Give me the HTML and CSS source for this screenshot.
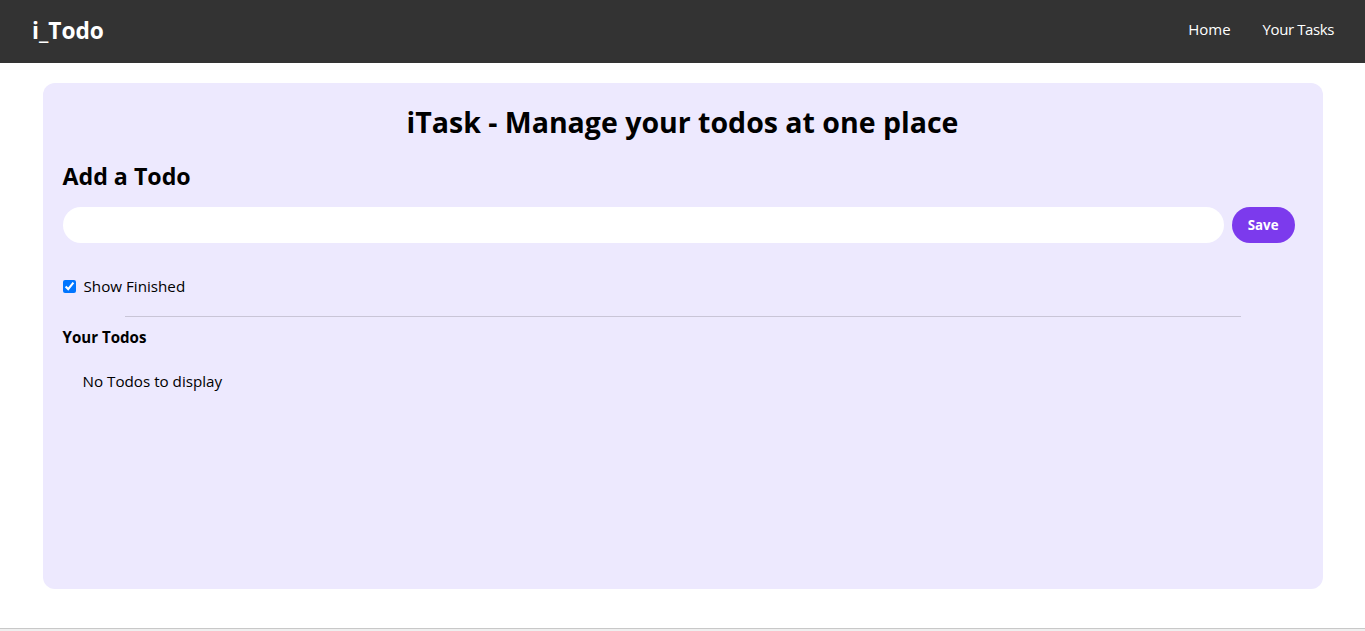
FILE: index.html
```html
<!DOCTYPE html>
<html lang="en">
<head>
<meta charset="utf-8">
<title>iTask</title>
<link rel="stylesheet" href="styles.css">
</head>
<body>
<nav class="navbar">
  <div class="logo">i_Todo</div>
  <ul class="nav-links">
    <li>Home</li>
    <li>Your Tasks</li>
  </ul>
</nav>
<main class="container">
  <h1 class="title">iTask - Manage your todos at one place</h1>
  <section class="add">
    <h2 class="add-heading">Add a Todo</h2>
    <div class="add-row">
      <input class="add-input" type="text">
      <button class="save-btn">Save</button>
    </div>
  </section>
  <div class="filter">
    <input class="filter-check" type="checkbox" checked>
    <label class="filter-label">Show Finished</label>
  </div>
  <div class="divider"></div>
  <h2 class="todos-heading">Your Todos</h2>
  <div class="todos">
    <div class="empty">No Todos to display</div>
  </div>
</main>
<footer class="footer"></footer>
</body>
</html>
```
FILE: styles.css
```css
* { box-sizing: border-box; }
html, body { margin: 0; padding: 0; }
body {
  font-family: "Open Sans", "Noto Sans", "Liberation Sans", sans-serif;
  color: #000;
  background: #fff;
  font-size: 15.2px;
  line-height: 24px;
}
.navbar {
  display: flex;
  justify-content: space-between;
  align-items: center;
  height: 63px;
  background: #333333;
  color: #fff;
}
.logo {
  margin: 0 0 2px 32px;
  font-size: 22.7px;
  font-weight: 700;
  line-height: 32px;
}
.nav-links {
  display: flex;
  gap: 32px;
  list-style: none;
  margin: 0 31px 5px 0;
  padding: 0;
  font-size: 15px;
}
.nav-links li:last-child { letter-spacing: -0.4px; }
.container {
  width: 1280px;
  margin: 20px auto 0;
  min-height: 506px;
  padding: 20px;
  background: #ede9fe;
  border-radius: 12px;
}
.title {
  margin: 0;
  font-size: 28.5px;
  line-height: 36px;
  font-weight: 700;
  text-align: center;
  padding-top: 1px;
}
.add { margin-top: 19px; }
.add-heading {
  margin: 0;
  font-size: 23.2px;
  line-height: 32px;
  font-weight: 700;
  padding-top: 1px;
}
.add-row {
  display: flex;
  margin-top: 15px;
}
.add-input {
  flex: 1;
  height: 36px;
  border: none;
  border-radius: 9999px;
  background: #fff;
  padding: 4px 20px;
  font: inherit;
  outline: none;
}
.save-btn {
  margin: 0 8px;
  height: 36px;
  padding: 8px 16px;
  border: none;
  border-radius: 9999px;
  background: #7c3aed;
  color: #fff;
  font-family: inherit;
  font-size: 13.3px;
  line-height: 20px;
  font-weight: 700;
}
.filter {
  display: flex;
  align-items: center;
  height: 24px;
  margin-top: 31px;
}
.filter-check {
  width: 13px;
  height: 13px;
  margin: 0;
}
.filter-label { margin-left: 8px; }
.divider {
  width: 90%;
  height: 1px;
  margin: 18px auto 0;
  background: #c9c5d7;
}
.todos-heading {
  margin: 8px 0 0;
  font-size: 15.1px;
  line-height: 24px;
  font-weight: 700;
}
.empty { margin: 20px; }
.footer {
  margin-top: 39px;
  height: 40px;
  border-top: 1px solid #c8c8c8;
  background: #efefef;
}
```
